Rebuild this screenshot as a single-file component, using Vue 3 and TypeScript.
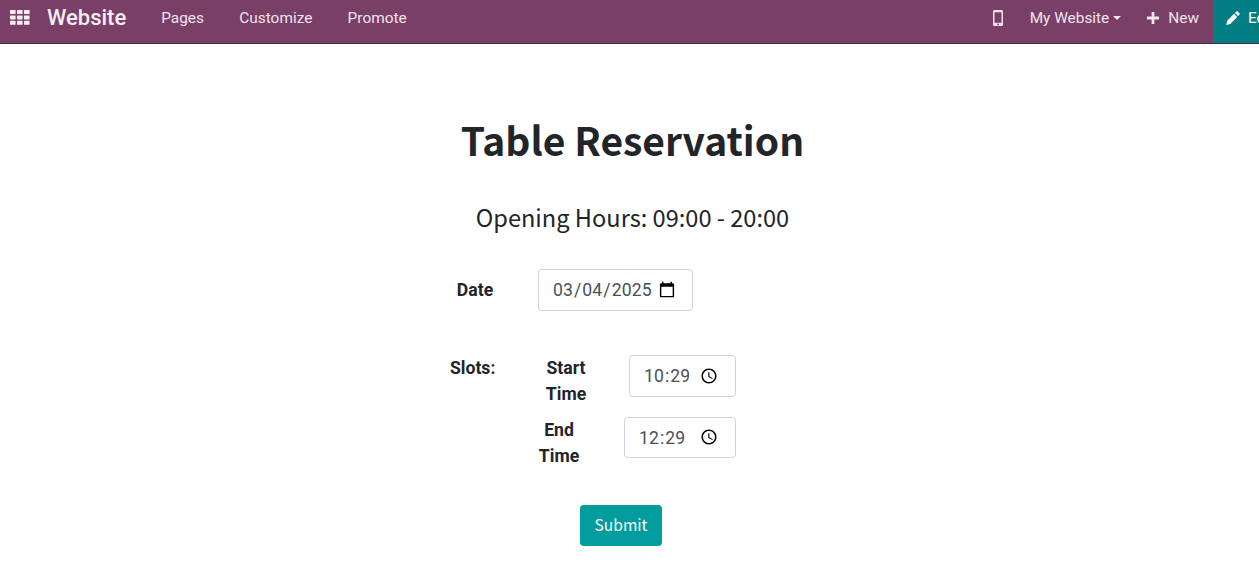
<script setup lang="ts">
import { ref } from 'vue'

const menus = ['Pages', 'Customize', 'Promote']
const date = ref('2025-03-04')
const startTime = ref('10:29')
const endTime = ref('12:29')
</script>

<template>
  <div class="page">
    <nav class="navbar">
      <a class="apps" aria-label="Apps">
        <svg width="20" height="15" viewBox="0 0 20 15" fill="currentColor">
          <rect x="0" y="0" width="5.6" height="4" rx="0.6" />
          <rect x="7" y="0" width="5.6" height="4" rx="0.6" />
          <rect x="14" y="0" width="5.6" height="4" rx="0.6" />
          <rect x="0" y="5.4" width="5.6" height="4" rx="0.6" />
          <rect x="7" y="5.4" width="5.6" height="4" rx="0.6" />
          <rect x="14" y="5.4" width="5.6" height="4" rx="0.6" />
          <rect x="0" y="10.8" width="5.6" height="4" rx="0.6" />
          <rect x="7" y="10.8" width="5.6" height="4" rx="0.6" />
          <rect x="14" y="10.8" width="5.6" height="4" rx="0.6" />
        </svg>
      </a>
      <span class="brand">Website</span>
      <a v-for="item in menus" :key="item" class="menu-item">{{ item }}</a>

      <div class="nav-right">
        <a class="mobile" aria-label="Mobile preview">
          <svg width="10" height="16" viewBox="0 0 10 16">
            <path
              fill="currentColor"
              fill-rule="evenodd"
              d="M1.6 0h6.8C9.3 0 10 .7 10 1.6v12.8c0 .9-.7 1.6-1.6 1.6H1.6C.7 16 0 15.300 0 14.400V1.600C0 .7.7 0 1.600 0zM1.500 2.200v10.600h7V2.200zM5 13.500a.9.9 0 1 0 0 1.800.9.9 0 0 0 0-1.800z"
            />
          </svg>
        </a>
        <a class="site-select">My Website<span class="caret"></span></a>
        <a class="new-btn">
          <svg width="12" height="12" viewBox="0 0 13 13" fill="currentColor">
            <path d="M5 0h3v5h5v3H8v5H5V8H0V5h5z" />
          </svg>
          New
        </a>
        <a class="edit-btn">
          <svg width="14" height="14" viewBox="0 0 14 14" fill="currentColor">
            <path d="M10.300.6a1 1 0 0 1 1.400 0l1.700 1.700a1 1 0 0 1 0 1.400l-1.300 1.300-3.100-3.100zM8.100 2.800l3.100 3.100-7 7-4 1 .9-4.100z" />
          </svg>
          Edit
        </a>
      </div>
    </nav>

    <main class="content">
      <h1 class="title">Table Reservation</h1>
      <p class="hours">Opening Hours: 09:00 - 20:00</p>

      <form class="form" @submit.prevent>
        <div class="date-row">
          <label class="date-label">Date</label>
          <input v-model="date" class="control date-input" type="date" />
        </div>

        <div class="slots">
          <label class="slots-label">Slots:</label>
          <div class="slot-rows">
            <div class="slot-row start">
              <label>Start Time</label>
              <input v-model="startTime" class="control" type="time" />
            </div>
            <div class="slot-row end">
              <label>End Time</label>
              <input v-model="endTime" class="control" type="time" />
            </div>
          </div>
        </div>

        <div class="actions">
          <button class="submit" type="submit">Submit</button>
        </div>
      </form>
    </main>
  </div>
</template>

<style scoped>
.page {
  font-family: Roboto, sans-serif;
  color: #212529;
  background: #fff;
  height: 568px;
  overflow: hidden;
}

.navbar {
  display: flex;
  align-items: center;
  box-sizing: border-box;
  height: 44px;
  background: #7a3f67;
  border-bottom: 1px solid #4f2a42;
  color: #f0e4ec;
  font-size: 15.4px;
  overflow: hidden;
}

.navbar a,
.brand {
  position: relative;
  top: -4px;
}

.apps {
  display: flex;
  margin: 0 17px 0 10px;
  color: #f6eef3;
}

.brand {
  font-size: 22px;
  font-weight: 500;
  margin-right: 35px;
  color: #f6eef3;
}

.menu-item {
  margin-right: 35.3px;
}

.nav-right {
  display: flex;
  align-items: center;
  margin-left: auto;
  height: 100%;
}

.mobile {
  display: flex;
  margin-right: 27px;
}

.site-select {
  display: flex;
  align-items: center;
  margin-right: 26px;
}

.caret {
  width: 0;
  height: 0;
  margin-left: 4px;
  border-top: 4px solid currentColor;
  border-left: 4px solid transparent;
  border-right: 4px solid transparent;
}

.new-btn {
  display: flex;
  align-items: center;
  gap: 9px;
  margin-right: 14px;
}

.navbar .edit-btn {
  top: 0;
  display: flex;
  align-items: center;
  gap: 8px;
  flex: 0 0 46px;
  width: 46px;
  height: 100%;
  padding: 0 0 8px 13px;
  box-sizing: border-box;
  background: #017e84;
  color: #fff;
  overflow: hidden;
  white-space: nowrap;
}

.edit-btn svg {
  flex-shrink: 0;
}

.content {
  display: flex;
  flex-direction: column;
  align-items: stretch;
}

.title {
  margin: 71px 0 0 6px;
  text-align: center;
  font-family: "Noto Sans CJK SC", sans-serif;
  font-size: 39px;
  font-weight: 700;
  line-height: 48px;
}

.hours {
  margin: 39px 0 0 6px;
  text-align: center;
  font-family: "Noto Sans CJK SC", sans-serif;
  font-size: 23.6px;
  font-weight: 400;
  line-height: 30px;
}

.form {
  width: 286px;
  margin: 37px 0 0 450px;
  font-size: 17.6px;
  font-weight: 700;
  line-height: 26px;
}

.control {
  box-sizing: border-box;
  height: 42px;
  padding: 6px 14px 6px 13px;
  border: 1px solid #ced4da;
  border-radius: 4px;
  background: #fff;
  color: #495057;
  font-family: Roboto, sans-serif;
  font-size: 17.6px;
  font-weight: 400;
  letter-spacing: 0.1px;
}

.date-row {
  display: flex;
  align-items: center;
  gap: 38px;
}

.date-label {
  width: 50px;
  text-align: center;
}

.date-input {
  width: 155px;
}

.slots {
  display: flex;
  justify-content: space-between;
  margin-top: 44px;
}

.slot-rows {
  display: flex;
  flex-direction: column;
  gap: 10px;
}

.slot-row {
  display: flex;
  justify-content: flex-end;
  align-items: flex-start;
}

.slot-row label {
  width: 42px;
  text-align: center;
}

.start .control {
  width: 107px;
  margin-left: 42px;
}

.end .control {
  width: 112px;
  height: 41px;
  margin-left: 44px;
}

.actions {
  display: flex;
  justify-content: center;
  margin-top: 36px;
  padding-left: 56px;
}

.submit {
  height: 41px;
  width: 82px;
  padding: 0 0 4px;
  border: none;
  border-radius: 4px;
  background: #009c9e;
  color: #fff;
  font-family: "Noto Sans CJK SC", sans-serif;
  font-size: 15.6px;
}
</style>
